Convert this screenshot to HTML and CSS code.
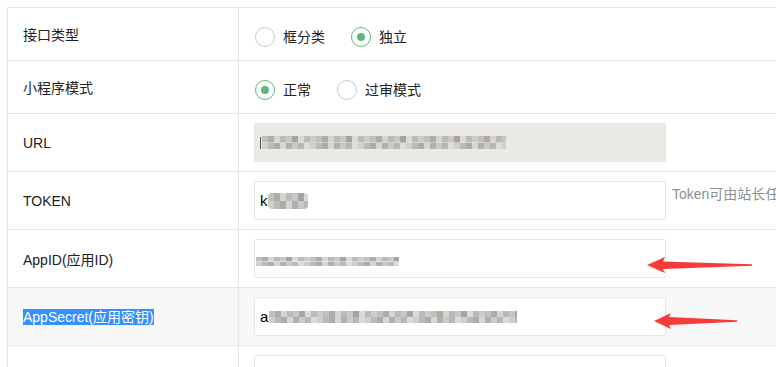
FILE: index.html
```html
<!DOCTYPE html>
<html lang="zh-CN">
<head>
<meta charset="utf-8">
<title>小程序设置</title>
<link rel="stylesheet" href="styles.css">
</head>
<body>
<div class="page">
  <div class="form">
    <div class="row">
      <div class="label">接口类型</div>
      <div class="field radios">
        <span class="radio"><i class="dot"></i>框分类</span>
        <span class="radio"><i class="dot checked"></i>独立</span>
      </div>
    </div>
    <div class="row">
      <div class="label">小程序模式</div>
      <div class="field radios">
        <span class="radio"><i class="dot checked"></i>正常</span>
        <span class="radio"><i class="dot"></i>过审模式</span>
      </div>
    </div>
    <div class="row">
      <div class="label">URL</div>
      <div class="field">
        <div class="input disabled"><span class="caret-bar"></span><span class="mosaic m-url"></span></div>
      </div>
    </div>
    <div class="row">
      <div class="label">TOKEN</div>
      <div class="field">
        <div class="input"><span class="txt">k</span><span class="mosaic m-token"></span></div>
        <div class="aux">Token可由站长任意填写</div>
      </div>
    </div>
    <div class="row">
      <div class="label">AppID(应用ID)</div>
      <div class="field">
        <div class="input"><span class="mosaic m-appid"></span></div>
      </div>
    </div>
    <div class="row hover">
      <div class="label"><span class="selected">AppSecret(应用密钥)</span></div>
      <div class="field">
        <div class="input"><span class="txt">a</span><span class="mosaic m-secret"></span></div>
      </div>
    </div>
    <div class="row">
      <div class="label"></div>
      <div class="field">
        <div class="input"></div>
      </div>
    </div>
  </div>
  <svg class="arrows" width="776" height="367" viewBox="0 0 776 367" aria-hidden="true">
    <polygon points="647,265 665,257 663,261.5 752,264.3 752,265.8 663,269 665,273" fill="#f73a3a"/>
    <polygon points="654,321 671,313 669,317 737,320.3 737,321.8 669,325 671,329" fill="#f73a3a"/>
  </svg>
</div>
</body>
</html>
```

FILE: styles.css
```css
html, body {
  margin: 0;
  padding: 0;
  background: #fff;
  overflow: hidden;
}
body {
  font-family: "Liberation Sans", "Noto Sans CJK SC", sans-serif;
  font-size: 14px;
  color: #222;
}
.page {
  position: relative;
  width: 776px;
  height: 367px;
  padding: 7px 0 0 7px;
  box-sizing: border-box;
  overflow: hidden;
}
.form {
  width: 1000px;
  border-top: 1px solid #e6e6e6;
  border-left: 1px solid #e6e6e6;
}
.row {
  display: grid;
  grid-template-columns: 231px 1fr;
}
.row.hover {
  background: #f7f7f7;
}
.label, .field {
  border-bottom: 1px solid #e6e6e6;
  box-sizing: border-box;
}
.label {
  border-right: 1px solid #e6e6e6;
  padding: 0 15px;
  display: flex;
  align-items: center;
  white-space: nowrap;
}
.field {
  padding: 9px 15px;
  display: flex;
  align-items: flex-start;
}
.radios {
  height: 53px;
}
.radio {
  display: flex;
  align-items: center;
  margin-top: 6px;
  line-height: 28px;
  height: 28px;
  margin-right: 25px;
  white-space: nowrap;
}
.dot {
  width: 20px;
  height: 20px;
  box-sizing: border-box;
  border: 1.5px solid #c9c9c9;
  border-radius: 50%;
  margin: 0 8px 0 1px;
  display: flex;
  align-items: center;
  justify-content: center;
  background: #fff;
}
.dot.checked {
  border-color: #5fb878;
}
.dot.checked::after {
  content: "";
  width: 8px;
  height: 8px;
  border-radius: 50%;
  background: #5fb878;
}
.input {
  width: 412px;
  height: 39px;
  box-sizing: border-box;
  border: 1px solid #e6e6e6;
  border-radius: 2px;
  background: #fff;
  display: flex;
  align-items: center;
  padding-left: 5px;
  color: #000;
}
.input.disabled {
  background: #eae9e3;
}
.caret-bar {
  width: 1px;
  height: 12px;
  background: #555;
  margin-right: 1px;
}
.txt {
  font-size: 15px;
  line-height: 18px;
}
.mosaic {
  display: inline-block;
  filter: blur(0.7px);
  background:
    repeating-linear-gradient(90deg, #c3bfb9 0 6px, #aeaba8 6px 12px, #d6d4cf 12px 18px, #b7bbc0 18px 24px, #cbc7c0 24px 30px, #a5a4a3 30px 36px, #dcdad6 36px 42px, #bfbab3 42px 48px, #c9ccd0 48px 54px) top / 100% 50% no-repeat,
    repeating-linear-gradient(90deg, #d1cfca 0 6px, #bdb9b3 6px 12px, #a9acb0 12px 18px, #d8d6d1 18px 24px, #b3afaa 24px 30px, #c7c9cc 30px 36px, #bcb7b0 36px 42px, #dddcd8 42px 48px) bottom / 100% 50% no-repeat;
}
.m-url {
  width: 244px;
  height: 13px;
}
.m-token {
  width: 40px;
  height: 16px;
  border-radius: 4px;
}
.m-appid {
  width: 143px;
  height: 9px;
  margin-left: -4px;
  margin-top: 6px;
}
.m-secret {
  width: 248px;
  height: 12px;
  margin-left: 1px;
}
.aux {
  margin: 3px 0 0 6px;
  line-height: 20px;
  color: #8f8f8f;
  white-space: nowrap;
}
.selected {
  background: #3390ff;
  color: #fff;
  line-height: 16px;
}
.arrows {
  position: absolute;
  left: 0;
  top: 0;
  pointer-events: none;
}
```
